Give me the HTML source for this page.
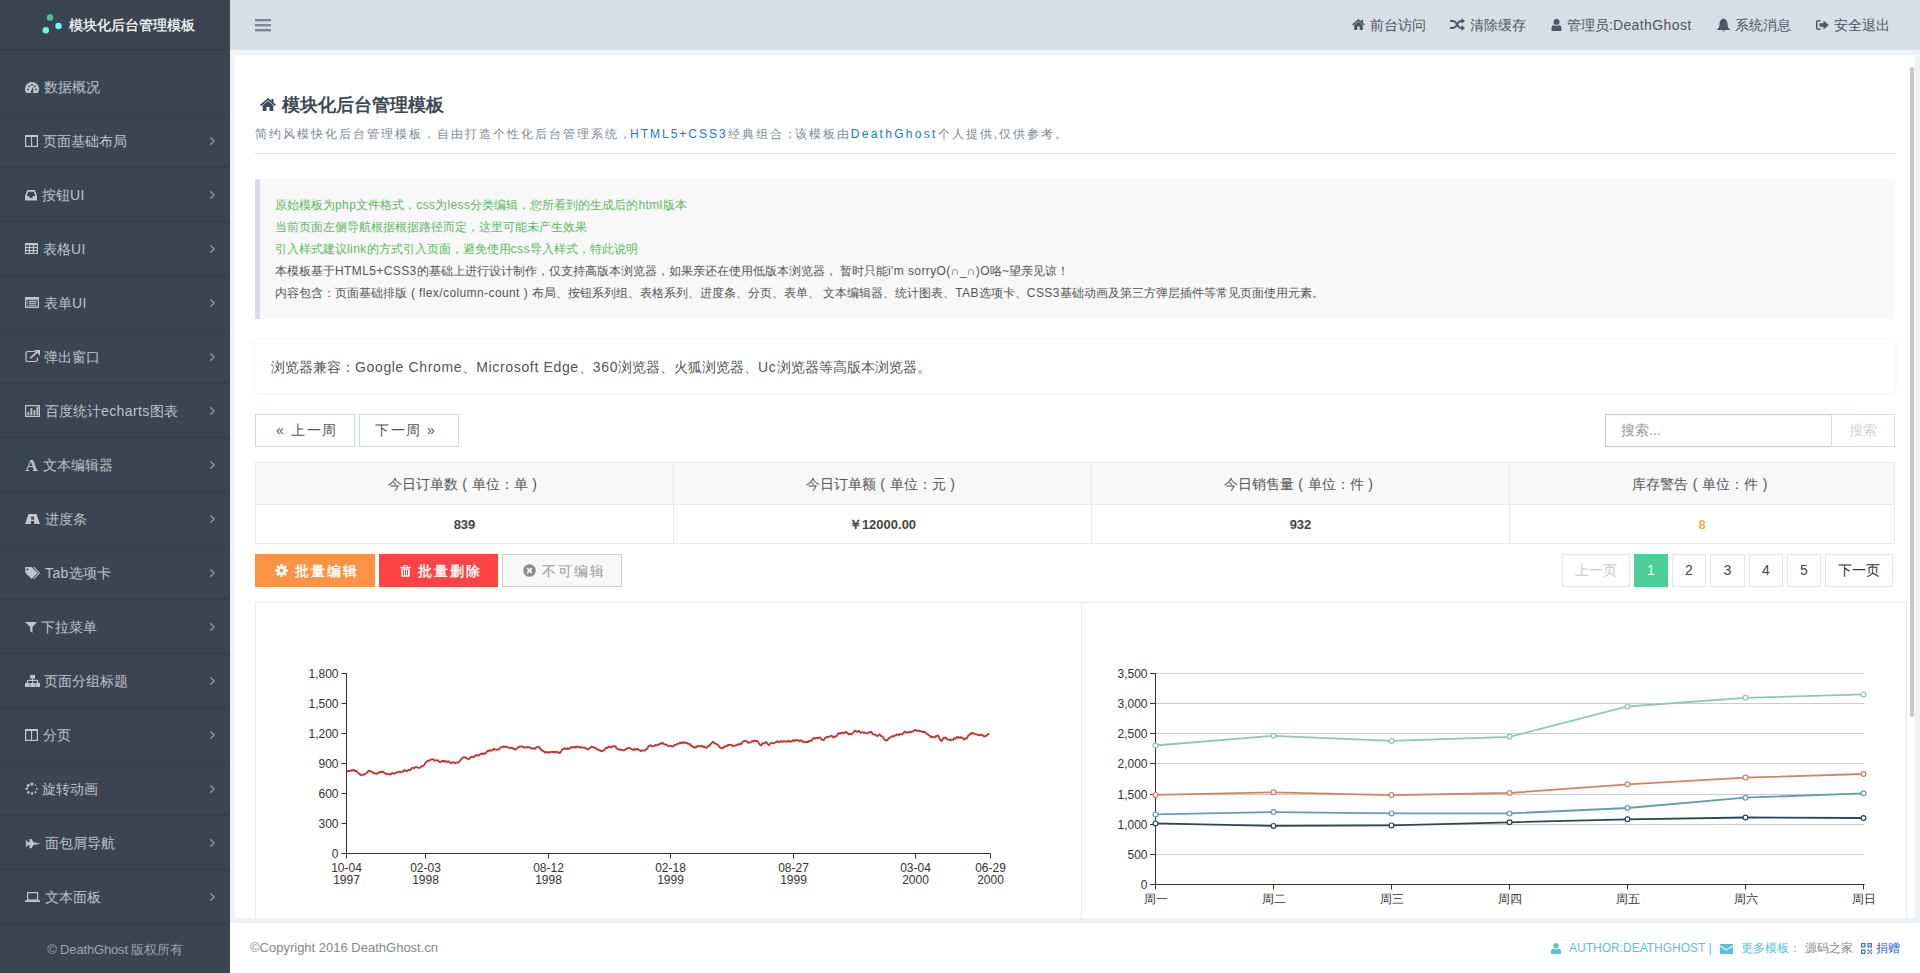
<!DOCTYPE html>
<html><head><meta charset="utf-8">
<style>
*{margin:0;padding:0;box-sizing:border-box}
html,body{width:1920px;height:973px;overflow:hidden;background:#eef1f5;font-family:"Liberation Sans",sans-serif;font-size:14px;color:#555}
.abs{position:absolute}
.nw{white-space:nowrap}
#aside{position:absolute;left:0;top:0;width:230px;height:973px;background:#3a4551}
#logo{position:absolute;left:0;top:0;width:230px;height:50px;border-bottom:1px solid #333d47}
#logo .t{position:absolute;left:69px;top:16px;line-height:18px;font-size:14px;color:#fff;white-space:nowrap;-webkit-text-stroke:0.25px #fff}
#nav{position:absolute;left:0;top:60px;width:230px;height:863px;overflow:hidden}
#nav .it{position:relative;height:54px;border-bottom:1px solid #343e48;color:#bdc3c9;font-size:14px}
#nav .it svg.ic{position:absolute;left:25px}
#nav .it span{position:absolute;top:18px;line-height:18px;white-space:nowrap}
#nav .it svg.ch{position:absolute;left:209px;top:22px}
#afoot{position:absolute;left:0;top:923px;width:230px;height:50px;border-top:1px solid #333d47;color:#9ca4ac;font-size:13px;text-align:center;line-height:51px;letter-spacing:-0.15px}
#hdr{position:absolute;left:230px;top:0;width:1690px;height:50px;background:#d8dee5}
#hdr .hl{position:absolute;top:16px;line-height:18px;color:#4a5665;font-size:14px;white-space:nowrap}
#hdr svg{position:absolute}
#foot{position:absolute;left:230px;top:923px;width:1690px;height:50px;background:#fff}
#panel{position:absolute;left:235px;top:55px;width:1680px;height:863px;background:#fff;overflow:hidden}
#sb{position:absolute;left:1910px;top:67px;width:4px;height:650px;border-radius:2px;background:#c8c8c8}
.ttl{position:absolute;left:282px;top:94px;font-size:18px;line-height:22px;font-weight:bold;color:#3b4856;white-space:nowrap}
.sub{position:absolute;left:255px;top:126px;font-size:12px;line-height:16px;letter-spacing:2px;color:#7d8893;white-space:nowrap}
.sub b{font-weight:normal;color:#1677d6}
.hr{position:absolute;left:255px;top:153px;width:1640px;height:1px;background:#d9e0e7}
.bq{position:absolute;left:255px;top:179px;width:1640px;height:140px;background:#f8f8f8;border-left:5px solid #d5dce5;padding:15px 0 0 15px;font-size:12px;line-height:22px;color:#555}
.bq .g{color:#5cb85c}
.bq div{white-space:nowrap}
.bc{position:absolute;left:255px;top:340px;width:1640px;height:53px;background:#fff;box-shadow:0 0 4px rgba(0,0,0,0.07);font-size:14px;line-height:20px;padding:17px 0 0 16px;color:#555;white-space:nowrap}
.btn{position:absolute;height:33px;border:1px solid #cfd8e1;background:#fff;color:#555;font-size:14px;line-height:31px;text-align:center;white-space:nowrap}
.tbl{position:absolute;left:255px;top:462px;width:1640px;height:82px;border:1px solid #e9e9e9}
.tbl .h{position:absolute;left:0;top:0;width:1638px;height:42px;background:#f8f8f8;border-bottom:1px solid #e9e9e9}
.tbl .c{position:absolute;top:0;height:80px;width:1px;background:#e9e9e9}
i.p{display:inline-block;width:14px;text-align:center}
i.p12{display:inline-block;width:12px;text-align:center}
.tbl .th{position:absolute;top:12px;line-height:18px;font-size:14px;color:#555;text-align:center;white-space:nowrap}
.tbl .td{position:absolute;top:53px;line-height:18px;font-size:13px;font-weight:bold;color:#444;text-align:center;white-space:nowrap}
.ob{position:absolute;top:554px;height:33px;line-height:35px;font-size:14px;letter-spacing:2px;white-space:nowrap}
.pg{position:absolute;top:554px;height:33px;border:1px solid #e5e5e5;background:#fff;font-size:14px;line-height:31px;text-align:center;color:#444}
.cp{position:absolute;top:602px;height:330px;border:1px solid #eaeaea;background:#fff}
#foot .ft{position:absolute;line-height:16px;font-size:13px;white-space:nowrap}
i{font-style:normal}
.l4{letter-spacing:0.4px}
.l6{letter-spacing:0.65px}
</style></head><body>
<div id="aside">
 <div id="logo">
  <svg class="abs" style="left:40px;top:12px" width="24" height="24"><circle cx="10" cy="5.5" r="3.2" fill="#48c78e"/><circle cx="18.5" cy="14" r="3.2" fill="#6ffbfb"/><circle cx="5.8" cy="18.2" r="3.2" fill="#6cf5e3"/></svg>
  <div class="t">模块化后台管理模板</div>
 </div>
 <div id="nav">
<div class="it"><svg class="ic" style="top:22px" width="14" height="12" viewBox="0 0 14 12"><path d="M1.26,11 A7,7 0 1 1 12.74,11 Z" fill="#c0c6cc"/><circle cx="3" cy="7.5" r="1" fill="#3a4551"/><circle cx="4.2" cy="4.2" r="1" fill="#3a4551"/><circle cx="7" cy="2.8" r="1" fill="#3a4551"/><circle cx="9.8" cy="4.2" r="1" fill="#3a4551"/><circle cx="11" cy="7.5" r="1" fill="#3a4551"/><path d="M6,9.5 L8.3,4 L8.2,9.8 Z" fill="#3a4551"/><circle cx="7.1" cy="9.6" r="1.3" fill="#3a4551"/></svg><span style="left:44px">数据概况</span></div>
<div class="it"><svg class="ic" style="top:21px" width="13" height="12" viewBox="0 0 13 12"><rect x="0.6" y="0.6" width="11.8" height="10.8" fill="none" stroke="#c0c6cc" stroke-width="1.2"/><rect x="0" y="0" width="13" height="2" fill="#c0c6cc"/><rect x="6" y="1" width="1.1" height="11" fill="#c0c6cc"/></svg><span style="left:43px">页面基础布局</span><svg class="ch" width="8" height="10" viewBox="0 0 8 10"><path d="M1.3,1.3 L5.2,5 L1.3,8.7" fill="none" stroke="#9eabb8" stroke-width="1.1"/></svg></div>
<div class="it"><svg class="ic" style="top:22px" width="12" height="11" viewBox="0 0 12 11"><path d="M2.3,0 H9.7 L12,6 V10.5 H0 V6 Z" fill="#c0c6cc"/><path d="M3.2,1.8 H8.8 L10.3,6 H8 L7.2,8 H4.8 L4,6 H1.7 Z" fill="#3a4551"/></svg><span style="left:42px">按钮<i class="l4">UI</i></span><svg class="ch" width="8" height="10" viewBox="0 0 8 10"><path d="M1.3,1.3 L5.2,5 L1.3,8.7" fill="none" stroke="#9eabb8" stroke-width="1.1"/></svg></div>
<div class="it"><svg class="ic" style="top:21px" width="13" height="11" viewBox="0 0 13 11"><rect x="0" y="0" width="13" height="11" fill="#c0c6cc"/><rect x="1.1" y="2.1" width="2.7" height="1.9" fill="#3a4551"/><rect x="1.1" y="5.1" width="2.7" height="1.9" fill="#3a4551"/><rect x="1.1" y="8.1" width="2.7" height="1.9" fill="#3a4551"/><rect x="5.1" y="2.1" width="2.7" height="1.9" fill="#3a4551"/><rect x="5.1" y="5.1" width="2.7" height="1.9" fill="#3a4551"/><rect x="5.1" y="8.1" width="2.7" height="1.9" fill="#3a4551"/><rect x="9.1" y="2.1" width="2.7" height="1.9" fill="#3a4551"/><rect x="9.1" y="5.1" width="2.7" height="1.9" fill="#3a4551"/><rect x="9.1" y="8.1" width="2.7" height="1.9" fill="#3a4551"/></svg><span style="left:43px">表格<i class="l4">UI</i></span><svg class="ch" width="8" height="10" viewBox="0 0 8 10"><path d="M1.3,1.3 L5.2,5 L1.3,8.7" fill="none" stroke="#9eabb8" stroke-width="1.1"/></svg></div>
<div class="it"><svg class="ic" style="top:21px" width="14" height="11" viewBox="0 0 14 11"><rect x="0" y="0" width="14" height="11" fill="#c0c6cc"/><rect x="1.2" y="2.8" width="11.6" height="6.9" fill="#3a4551"/><rect x="2" y="3.8" width="1" height="1.1" fill="#c0c6cc"/><rect x="4" y="3.8" width="7.5" height="1.1" fill="#c0c6cc"/><rect x="2" y="5.7" width="1" height="1.1" fill="#c0c6cc"/><rect x="4" y="5.7" width="7.5" height="1.1" fill="#c0c6cc"/><rect x="2" y="7.7" width="1" height="1.1" fill="#c0c6cc"/><rect x="4" y="7.7" width="7.5" height="1.1" fill="#c0c6cc"/></svg><span style="left:44px">表单<i class="l4">UI</i></span><svg class="ch" width="8" height="10" viewBox="0 0 8 10"><path d="M1.3,1.3 L5.2,5 L1.3,8.7" fill="none" stroke="#9eabb8" stroke-width="1.1"/></svg></div>
<div class="it"><svg class="ic" style="top:20px" width="15" height="12" viewBox="0 0 15 12"><path d="M10,1.5 H3 Q1,1.5 1,3.5 V10 Q1,11.6 3,11.6 H10 Q12.4,11.6 12.4,9.5 V7.5" fill="none" stroke="#c0c6cc" stroke-width="1.2"/><path d="M5.5,8.2 L12,1.8" stroke="#c0c6cc" stroke-width="1.7"/><path d="M9.2,0 H15 V5.8 Z" fill="#c0c6cc"/></svg><span style="left:44px">弹出窗口</span><svg class="ch" width="8" height="10" viewBox="0 0 8 10"><path d="M1.3,1.3 L5.2,5 L1.3,8.7" fill="none" stroke="#9eabb8" stroke-width="1.1"/></svg></div>
<div class="it"><svg class="ic" style="top:21px" width="15" height="12" viewBox="0 0 15 12"><rect x="0.6" y="0.6" width="13.8" height="10.8" fill="none" stroke="#c0c6cc" stroke-width="1.2"/><rect x="2.5" y="7" width="1.8" height="3.2" fill="#c0c6cc"/><rect x="5.5" y="3" width="1.8" height="7.2" fill="#c0c6cc"/><rect x="8.5" y="5" width="1.8" height="5.2" fill="#c0c6cc"/><rect x="11.5" y="1.8" width="1.8" height="8.4" fill="#c0c6cc"/></svg><span style="left:45px">百度统计<i class="l4">echarts</i>图表</span><svg class="ch" width="8" height="10" viewBox="0 0 8 10"><path d="M1.3,1.3 L5.2,5 L1.3,8.7" fill="none" stroke="#9eabb8" stroke-width="1.1"/></svg></div>
<div class="it"><svg class="ic" style="top:21px" width="14" height="13" viewBox="0 0 14 13"><text x="6.6" y="12.2" text-anchor="middle" font-family="Liberation Serif" font-weight="bold" font-size="17.5" fill="#c0c6cc">A</text></svg><span style="left:43px">文本编辑器</span><svg class="ch" width="8" height="10" viewBox="0 0 8 10"><path d="M1.3,1.3 L5.2,5 L1.3,8.7" fill="none" stroke="#9eabb8" stroke-width="1.1"/></svg></div>
<div class="it"><svg class="ic" style="top:22px" width="15" height="10" viewBox="0 0 15 10"><path d="M3.5,0 H11.5 L15,10 H0 Z" fill="#c0c6cc"/><rect x="6.2" y="2.6" width="2.8" height="3" fill="#3a4551"/><rect x="6.0" y="7" width="3.2" height="3" fill="#3a4551"/></svg><span style="left:45px">进度条</span><svg class="ch" width="8" height="10" viewBox="0 0 8 10"><path d="M1.3,1.3 L5.2,5 L1.3,8.7" fill="none" stroke="#9eabb8" stroke-width="1.1"/></svg></div>
<div class="it"><svg class="ic" style="top:21px" width="15" height="12" viewBox="0 0 15 12"><path d="M0.3,0 H6.5 L12.5,6 L6.6,12 L0.3,5.7 Z" fill="#c0c6cc"/><circle cx="2.5" cy="2.5" r="0.9" fill="#3a4551"/><path d="M8,0 H9.3 L15,6 L9.3,12 H8 L13.6,6 Z" fill="#c0c6cc"/></svg><span style="left:45px"><i class="l4">Tab</i>选项卡</span><svg class="ch" width="8" height="10" viewBox="0 0 8 10"><path d="M1.3,1.3 L5.2,5 L1.3,8.7" fill="none" stroke="#9eabb8" stroke-width="1.1"/></svg></div>
<div class="it"><svg class="ic" style="top:22px" width="12" height="11" viewBox="0 0 12 11"><path d="M0,0 H12 L7.5,5 V11 L5.2,9.2 V5 Z" fill="#c0c6cc"/></svg><span style="left:41px">下拉菜单</span><svg class="ch" width="8" height="10" viewBox="0 0 8 10"><path d="M1.3,1.3 L5.2,5 L1.3,8.7" fill="none" stroke="#9eabb8" stroke-width="1.1"/></svg></div>
<div class="it"><svg class="ic" style="top:21px" width="15" height="12" viewBox="0 0 15 12"><rect x="5.2" y="0" width="4.8" height="3.6" fill="#c0c6cc"/><rect x="7.1" y="3.5" width="1" height="2.2" fill="#c0c6cc"/><path d="M2.5,8.2 V6.4 Q2.5,5.4 3.5,5.4 H11.7 Q12.7,5.4 12.7,6.4 V8.2" fill="none" stroke="#c0c6cc" stroke-width="1.2"/><rect x="7.1" y="5" width="1" height="3.2" fill="#c0c6cc"/><rect x="0" y="8" width="4.7" height="4" fill="#c0c6cc"/><rect x="5.2" y="8" width="4.7" height="4" fill="#c0c6cc"/><rect x="10.3" y="8" width="4.7" height="4" fill="#c0c6cc"/></svg><span style="left:44px">页面分组标题</span><svg class="ch" width="8" height="10" viewBox="0 0 8 10"><path d="M1.3,1.3 L5.2,5 L1.3,8.7" fill="none" stroke="#9eabb8" stroke-width="1.1"/></svg></div>
<div class="it"><svg class="ic" style="top:21px" width="13" height="12" viewBox="0 0 13 12"><rect x="0.6" y="0.6" width="11.8" height="10.8" fill="none" stroke="#c0c6cc" stroke-width="1.2"/><rect x="0" y="0" width="13" height="2" fill="#c0c6cc"/><rect x="6" y="1" width="1.1" height="11" fill="#c0c6cc"/></svg><span style="left:43px">分页</span><svg class="ch" width="8" height="10" viewBox="0 0 8 10"><path d="M1.3,1.3 L5.2,5 L1.3,8.7" fill="none" stroke="#9eabb8" stroke-width="1.1"/></svg></div>
<div class="it"><svg class="ic" style="top:20px" width="14" height="13" viewBox="0 0 14 13"><circle cx="6.9" cy="2" r="1.6" fill="#c0c6cc"/><circle cx="3.2" cy="3.4" r="1.5" fill="#c0c6cc"/><circle cx="1.8" cy="6.8" r="1.3" fill="#c0c6cc"/><circle cx="3.3" cy="10.3" r="1.3" fill="#c0c6cc"/><circle cx="7" cy="11.5" r="1.2" fill="#c0c6cc"/><circle cx="10.4" cy="10.2" r="1" fill="#c0c6cc"/><circle cx="11.8" cy="6.8" r="0.9" fill="#c0c6cc"/><circle cx="10.5" cy="3.3" r="0.7" fill="#c0c6cc"/></svg><span style="left:42px">旋转动画</span><svg class="ch" width="8" height="10" viewBox="0 0 8 10"><path d="M1.3,1.3 L5.2,5 L1.3,8.7" fill="none" stroke="#9eabb8" stroke-width="1.1"/></svg></div>
<div class="it"><svg class="ic" style="top:23px" width="15" height="10" viewBox="0 0 15 10"><path d="M0.5,1.5 H1.8 L3.2,3.3 H4.5 L4.5,0 H6.5 L8.5,3.3 L15,4.4 V4.8 L8.5,6 L6.5,9.3 H4.5 V6 H3.2 L1.8,7.8 H0.5 L1.2,4.6 Z" fill="#c0c6cc"/></svg><span style="left:45px">面包屑导航</span><svg class="ch" width="8" height="10" viewBox="0 0 8 10"><path d="M1.3,1.3 L5.2,5 L1.3,8.7" fill="none" stroke="#9eabb8" stroke-width="1.1"/></svg></div>
<div class="it"><svg class="ic" style="top:22px" width="15" height="10" viewBox="0 0 15 10"><rect x="2.6" y="0.6" width="10" height="7.4" fill="none" stroke="#c0c6cc" stroke-width="1.2"/><rect x="0" y="8.2" width="15" height="1.8" fill="#c0c6cc"/></svg><span style="left:45px">文本面板</span><svg class="ch" width="8" height="10" viewBox="0 0 8 10"><path d="M1.3,1.3 L5.2,5 L1.3,8.7" fill="none" stroke="#9eabb8" stroke-width="1.1"/></svg></div>
 </div>
 <div id="afoot">© DeathGhost 版权所有</div>
</div>

<div id="hdr">
 <svg style="left:25px;top:19px" width="16" height="13"><rect x="0" y="0" width="16" height="2.4" fill="#7b8896"/><rect x="0" y="5" width="16" height="2.4" fill="#7b8896"/><rect x="0" y="10" width="16" height="2.4" fill="#7b8896"/></svg>
 <!-- home -->
 <svg style="left:1122px;top:19px" width="13" height="11" viewBox="0 0 13 11"><path d="M6.5,0 L13,5.6 L12,6.6 L6.5,1.9 L1,6.6 L0,5.6 Z" fill="#4a5866"/><path d="M2.2,6 L6.5,2.4 L10.8,6 V11 H7.7 V7.6 H5.3 V11 H2.2 Z" fill="#4a5866"/><rect x="9.3" y="0.8" width="1.8" height="3" fill="#4a5866"/></svg>
 <div class="hl" style="left:1140px">前台访问</div>
 <!-- shuffle -->
 <svg style="left:1220px;top:18px" width="15" height="13" viewBox="0 0 15 13"><path d="M0,3 H3 Q5,3 6.5,5.5 L8,8 Q9.3,10 11,10 H12" fill="none" stroke="#4a5866" stroke-width="2"/><path d="M0,10 H3 Q5,10 6.5,7.5 L8,5 Q9.3,3 11,3 H12" fill="none" stroke="#4a5866" stroke-width="2"/><path d="M11.5,0 L15,3 L11.5,6 Z M11.5,7 L15,10 L11.5,13 Z" fill="#4a5866"/></svg>
 <div class="hl" style="left:1240px">清除缓存</div>
 <!-- user -->
 <svg style="left:1321px;top:19px" width="11" height="12" viewBox="0 0 11 12"><circle cx="5.5" cy="3" r="3" fill="#4a5866"/><path d="M0.6,12 V8.6 Q0.6,6.3 2.8,6.3 Q5.5,7.6 8.2,6.3 Q10.4,6.3 10.4,8.6 V12 Z" fill="#4a5866"/></svg>
 <div class="hl" style="left:1337px">管理员:<i class="l4">DeathGhost</i></div>
 <!-- bell -->
 <svg style="left:1487px;top:18px" width="13" height="14" viewBox="0 0 13 14"><path d="M6.5,0.5 Q10.5,1.5 10.5,6 Q10.5,10 13,11.5 V12 H0 V11.5 Q2.5,10 2.5,6 Q2.5,1.5 6.5,0.5 Z" fill="#4a5866"/><path d="M5,12.5 Q6.5,14.5 8,12.5 Z" fill="#4a5866"/></svg>
 <div class="hl" style="left:1505px">系统消息</div>
 <!-- signout -->
 <svg style="left:1586px;top:20px" width="13" height="10" viewBox="0 0 13 10"><path d="M4.5,0.7 H2 Q0.7,0.7 0.7,2 V8 Q0.7,9.3 2,9.3 H4.5" fill="none" stroke="#4a5866" stroke-width="1.4"/><path d="M3.5,3.3 H7.5 V0.5 L12.8,5 L7.5,9.5 V6.7 H3.5 Z" fill="#4a5866"/></svg>
 <div class="hl" style="left:1604px">安全退出</div>
</div>

<div id="panel"></div>
<div id="sb"></div>

<!-- page title -->
<svg class="abs" style="left:260px;top:98px" width="16" height="13" viewBox="0 0 16 13"><path d="M8,0 L16,6.8 L14.8,8 L8,2.3 L1.2,8 L0,6.8 Z" fill="#3d4a57"/><path d="M2.7,7.2 L8,2.9 L13.3,7.2 V13 H9.5 V9 H6.5 V13 H2.7 Z" fill="#3d4a57"/><rect x="11.3" y="1" width="2.2" height="3.8" fill="#3d4a57"/></svg>
<div class="ttl">模块化后台管理模板</div>
<div class="sub">简约风模快化后台管理模板，自由打造个性化后台管理系统<i style="margin-right:-3px">，</i><b>HTML5+CSS3</b>经典组合<i style="margin-right:-3px">；</i>该模板由<b style="letter-spacing:2.3px">DeathGhost</b>个人提供,仅供参考。</div>
<div class="hr"></div>

<div class="bq">
 <div class="g">原始模板为<i class="l4">php</i>文件格式，<i class="l4">css</i>为<i class="l4">less</i>分类编辑，您所看到的生成后的<i class="l4">html</i>版本</div>
 <div class="g">当前页面左侧导航根据根据路径而定，这里可能未产生效果</div>
 <div class="g">引入样式建议<i class="l4">link</i>的方式引入页面，避免使用<i class="l4">css</i>导入样式，特此说明</div>
 <div>本模板基于<i class="l4">HTML5+CSS3</i>的基础上进行设计制作，仅支持高版本浏览器，如果亲还在使用低版本浏览器， 暂时只能<i class="l4">i'm sorryO(∩_∩)O</i>咯~望亲见谅！</div>
 <div>内容包含：页面基础排版<i class="p12">(</i><i class="l4">flex/column-count</i><i class="p12">)</i>布局、按钮系列组、表格系列、进度条、分页、表单、 文本编辑器、统计图表、<i class="l4">TAB</i>选项卡、<i class="l4">CSS3</i>基础动画及第三方弹层插件等常见页面使用元素。</div>
</div>

<div class="bc">浏览器兼容：<i class="l6">Google Chrome</i>、<i class="l6">Microsoft Edge</i>、<i class="l6">360</i>浏览器、火狐浏览器、<i class="l6">Uc</i>浏览器等高版本浏览器。</div>

<div class="btn" style="left:255px;top:414px;width:100px"><span class="abs" style="left:20px;top:0">«</span><span class="abs" style="left:35px;top:0;letter-spacing:1.5px">上一周</span></div>
<div class="btn" style="left:359px;top:414px;width:100px"><span class="abs" style="left:15px;top:0;letter-spacing:1.5px">下一周</span><span class="abs" style="left:67px;top:0">»</span></div>

<div class="abs" style="left:1605px;top:414px;width:227px;height:33px;border:1px solid #c9c9c9;background:#fff;font-size:14px;line-height:31px;color:#999;padding-left:15px">搜索...</div>
<div class="abs" style="left:1831px;top:414px;width:64px;height:33px;border:1px solid #d3dce6;border-left:1px solid #d3dce6;background:#fff;font-size:14px;line-height:31px;color:#cfd3d8;text-align:center">搜索</div>

<div class="tbl">
 <div class="h"></div>
 <div class="c" style="left:417px"></div>
 <div class="c" style="left:835px"></div>
 <div class="c" style="left:1253px"></div>
 <div class="th" style="left:0;width:417px">今日订单数<i class="p">(</i>单位：单<i class="p">)</i></div>
 <div class="th" style="left:418px;width:417px">今日订单额<i class="p">(</i>单位：元<i class="p">)</i></div>
 <div class="th" style="left:836px;width:417px">今日销售量<i class="p">(</i>单位：件<i class="p">)</i></div>
 <div class="th" style="left:1254px;width:384px">库存警告<i class="p">(</i>单位：件<i class="p">)</i></div>
 <div class="td" style="left:0;width:417px">839</div>
 <div class="td" style="left:418px;width:417px">￥12000.00</div>
 <div class="td" style="left:836px;width:417px">932</div>
 <div class="td" style="left:1254px;width:384px;color:#f0ad4e">8</div>
</div>

<div class="ob" style="left:255px;width:120px;background:#fe9245;color:#fff;font-weight:500;-webkit-text-stroke:0.4px #fff"><svg class="abs" style="left:20px;top:10px" width="13" height="13" viewBox="0 0 13 13"><circle cx="6.5" cy="6.5" r="4.6" fill="#fff"/><rect x="5.3" y="0" width="2.4" height="3" rx="0.4" fill="#fff" transform="rotate(0 6.5 6.5)"/><rect x="5.3" y="0" width="2.4" height="3" rx="0.4" fill="#fff" transform="rotate(45 6.5 6.5)"/><rect x="5.3" y="0" width="2.4" height="3" rx="0.4" fill="#fff" transform="rotate(90 6.5 6.5)"/><rect x="5.3" y="0" width="2.4" height="3" rx="0.4" fill="#fff" transform="rotate(135 6.5 6.5)"/><rect x="5.3" y="0" width="2.4" height="3" rx="0.4" fill="#fff" transform="rotate(180 6.5 6.5)"/><rect x="5.3" y="0" width="2.4" height="3" rx="0.4" fill="#fff" transform="rotate(225 6.5 6.5)"/><rect x="5.3" y="0" width="2.4" height="3" rx="0.4" fill="#fff" transform="rotate(270 6.5 6.5)"/><rect x="5.3" y="0" width="2.4" height="3" rx="0.4" fill="#fff" transform="rotate(315 6.5 6.5)"/><circle cx="6.5" cy="6.5" r="1.9" fill="#fe9245"/></svg><span class="abs" style="left:40px;top:0">批量编辑</span></div>
<div class="ob" style="left:379px;width:119px;background:#fe4343;color:#fff;font-weight:500;-webkit-text-stroke:0.4px #fff"><svg class="abs" style="left:21px;top:11px" width="11" height="12" viewBox="0 0 11 12"><rect x="0" y="1.8" width="11" height="1.4" fill="#fff"/><path d="M3.4,2 V1.2 Q3.4,0.5 4.2,0.5 H6.8 Q7.6,0.5 7.6,1.2 V2" fill="none" stroke="#fff" stroke-width="1"/><path d="M1.3,3.4 H9.7 V10.8 Q9.7,11.8 8.7,11.8 H2.3 Q1.3,11.8 1.3,10.8 Z M3,4.8 V10.5 H4 V4.8 Z M5,4.8 V10.5 H6 V4.8 Z M7,4.8 V10.5 H8 V4.8 Z" fill="#fff" fill-rule="evenodd"/></svg><span class="abs" style="left:39px;top:0">批量删除</span></div>
<div class="ob" style="left:502px;width:120px;background:#f8f8f8;border:1px solid #cfcfcf;line-height:33px;color:#999"><svg class="abs" style="left:20px;top:9px" width="13" height="13" viewBox="0 0 13 13"><circle cx="6.5" cy="6.5" r="6.3" fill="#8e8e8e"/><path d="M4.2,4.2 L8.8,8.8 M8.8,4.2 L4.2,8.8" stroke="#f8f8f8" stroke-width="1.8"/></svg><span class="abs" style="left:39px;top:0">不可编辑</span></div>

<div class="pg" style="left:1562px;width:68px;color:#c8c8c8">上一页</div>
<div class="pg" style="left:1634px;width:34px;background:#4bcf96;border-color:#4bcf96;color:#fff">1</div>
<div class="pg" style="left:1672px;width:34px">2</div>
<div class="pg" style="left:1710px;width:35px">3</div>
<div class="pg" style="left:1749px;width:34px">4</div>
<div class="pg" style="left:1787px;width:34px">5</div>
<div class="pg" style="left:1825px;width:68px;color:#333">下一页</div>

<div class="abs" style="left:0;top:0;width:1920px;height:918px;overflow:hidden">
<div class="cp" style="left:255px;width:827px"></div>
<div class="cp" style="left:1081px;width:826px"></div>
<svg style="position:absolute;left:255px;top:603px" width="830" height="320"><g transform="translate(-255,-603)"><line x1="346.5" y1="673" x2="346.5" y2="853.5" stroke="#333" stroke-width="1"/><line x1="346" y1="853.5" x2="990.5" y2="853.5" stroke="#333" stroke-width="1"/><line x1="341.5" y1="853.5" x2="346.5" y2="853.5" stroke="#333"/><text x="338.5" y="857.8" text-anchor="end" font-family="Liberation Sans, sans-serif" font-size="12" fill="#333">0</text><line x1="341.5" y1="823.5" x2="346.5" y2="823.5" stroke="#333"/><text x="338.5" y="827.8" text-anchor="end" font-family="Liberation Sans, sans-serif" font-size="12" fill="#333">300</text><line x1="341.5" y1="793.5" x2="346.5" y2="793.5" stroke="#333"/><text x="338.5" y="797.8" text-anchor="end" font-family="Liberation Sans, sans-serif" font-size="12" fill="#333">600</text><line x1="341.5" y1="763.5" x2="346.5" y2="763.5" stroke="#333"/><text x="338.5" y="767.8" text-anchor="end" font-family="Liberation Sans, sans-serif" font-size="12" fill="#333">900</text><line x1="341.5" y1="733.5" x2="346.5" y2="733.5" stroke="#333"/><text x="338.5" y="737.8" text-anchor="end" font-family="Liberation Sans, sans-serif" font-size="12" fill="#333">1,200</text><line x1="341.5" y1="703.5" x2="346.5" y2="703.5" stroke="#333"/><text x="338.5" y="707.8" text-anchor="end" font-family="Liberation Sans, sans-serif" font-size="12" fill="#333">1,500</text><line x1="341.5" y1="673.5" x2="346.5" y2="673.5" stroke="#333"/><text x="338.5" y="677.8" text-anchor="end" font-family="Liberation Sans, sans-serif" font-size="12" fill="#333">1,800</text><line x1="346.5" y1="853.5" x2="346.5" y2="858.5" stroke="#333"/><text x="346.5" y="871.8" text-anchor="middle" font-family="Liberation Sans, sans-serif" font-size="12" fill="#333">10-04</text><text x="346.5" y="883.8" text-anchor="middle" font-family="Liberation Sans, sans-serif" font-size="12" fill="#333">1997</text><line x1="425.5" y1="853.5" x2="425.5" y2="858.5" stroke="#333"/><text x="425.5" y="871.8" text-anchor="middle" font-family="Liberation Sans, sans-serif" font-size="12" fill="#333">02-03</text><text x="425.5" y="883.8" text-anchor="middle" font-family="Liberation Sans, sans-serif" font-size="12" fill="#333">1998</text><line x1="548.5" y1="853.5" x2="548.5" y2="858.5" stroke="#333"/><text x="548.5" y="871.8" text-anchor="middle" font-family="Liberation Sans, sans-serif" font-size="12" fill="#333">08-12</text><text x="548.5" y="883.8" text-anchor="middle" font-family="Liberation Sans, sans-serif" font-size="12" fill="#333">1998</text><line x1="670.5" y1="853.5" x2="670.5" y2="858.5" stroke="#333"/><text x="670.5" y="871.8" text-anchor="middle" font-family="Liberation Sans, sans-serif" font-size="12" fill="#333">02-18</text><text x="670.5" y="883.8" text-anchor="middle" font-family="Liberation Sans, sans-serif" font-size="12" fill="#333">1999</text><line x1="793.5" y1="853.5" x2="793.5" y2="858.5" stroke="#333"/><text x="793.5" y="871.8" text-anchor="middle" font-family="Liberation Sans, sans-serif" font-size="12" fill="#333">08-27</text><text x="793.5" y="883.8" text-anchor="middle" font-family="Liberation Sans, sans-serif" font-size="12" fill="#333">1999</text><line x1="915.5" y1="853.5" x2="915.5" y2="858.5" stroke="#333"/><text x="915.5" y="871.8" text-anchor="middle" font-family="Liberation Sans, sans-serif" font-size="12" fill="#333">03-04</text><text x="915.5" y="883.8" text-anchor="middle" font-family="Liberation Sans, sans-serif" font-size="12" fill="#333">2000</text><line x1="990.5" y1="853.5" x2="990.5" y2="858.5" stroke="#333"/><text x="990.5" y="871.8" text-anchor="middle" font-family="Liberation Sans, sans-serif" font-size="12" fill="#333">06-29</text><text x="990.5" y="883.8" text-anchor="middle" font-family="Liberation Sans, sans-serif" font-size="12" fill="#333">2000</text><path d="M346.50,771.54 L347.15,771.08 L347.80,771.49 L348.45,770.88 L349.10,771.13 L349.75,771.02 L350.40,770.45 L351.05,770.72 L351.70,770.18 L352.35,770.40 L353.00,770.01 L353.65,769.77 L354.30,770.17 L354.95,771.18 L355.60,770.93 L356.25,770.94 L356.90,771.51 L357.55,772.42 L358.20,772.78 L358.85,773.06 L359.50,774.41 L360.15,774.19 L360.80,775.38 L361.45,775.37 L362.10,775.05 L362.75,774.61 L363.40,774.41 L364.05,774.84 L364.70,773.96 L365.35,773.74 L366.00,773.48 L366.65,772.75 L367.30,772.40 L367.95,771.40 L368.60,770.72 L369.25,770.55 L369.90,771.24 L370.55,771.43 L371.20,771.49 L371.85,772.03 L372.50,772.31 L373.15,772.35 L373.80,773.18 L374.45,773.65 L375.10,773.29 L375.75,773.51 L376.40,773.51 L377.05,773.83 L377.70,773.61 L378.35,772.64 L379.00,772.92 L379.65,771.87 L380.30,771.71 L380.95,772.18 L381.60,771.67 L382.25,771.90 L382.90,771.47 L383.55,772.20 L384.20,772.93 L384.85,773.21 L385.50,773.92 L386.15,773.60 L386.80,773.95 L387.45,774.03 L388.10,774.04 L388.75,773.82 L389.40,774.20 L390.05,774.57 L390.70,774.08 L391.35,773.97 L392.00,772.94 L392.65,773.13 L393.30,773.16 L393.95,773.67 L394.60,773.77 L395.25,773.03 L395.90,772.68 L396.55,772.90 L397.20,772.12 L397.85,772.28 L398.50,771.99 L399.15,771.74 L399.80,771.50 L400.45,772.38 L401.10,772.02 L401.75,771.75 L402.40,771.49 L403.05,771.76 L403.70,770.58 L404.35,770.23 L405.00,770.22 L405.65,770.85 L406.30,771.16 L406.95,771.38 L407.60,770.58 L408.25,770.14 L408.90,769.67 L409.55,770.04 L410.20,770.34 L410.85,769.28 L411.50,768.54 L412.15,768.07 L412.80,767.74 L413.45,767.90 L414.10,768.20 L414.75,767.88 L415.40,767.16 L416.05,767.18 L416.70,767.04 L417.35,767.18 L418.00,767.84 L418.65,767.94 L419.30,767.77 L419.95,767.69 L420.60,767.53 L421.25,766.28 L421.90,766.44 L422.55,766.14 L423.20,765.86 L423.85,765.34 L424.50,764.21 L425.15,763.30 L425.80,762.15 L426.45,762.12 L427.10,761.27 L427.75,760.76 L428.40,760.63 L429.05,760.39 L429.70,760.42 L430.35,759.94 L431.00,759.47 L431.65,759.35 L432.30,759.19 L432.95,759.50 L433.60,759.25 L434.25,760.36 L434.90,760.78 L435.55,760.40 L436.20,760.32 L436.85,760.44 L437.50,760.58 L438.15,760.35 L438.80,761.30 L439.45,762.20 L440.10,762.06 L440.75,762.00 L441.40,761.37 L442.05,760.95 L442.70,761.01 L443.35,760.93 L444.00,761.72 L444.65,761.29 L445.30,760.80 L445.95,761.86 L446.60,761.99 L447.25,761.53 L447.90,761.82 L448.55,761.27 L449.20,761.65 L449.85,762.62 L450.50,763.14 L451.15,763.27 L451.80,762.72 L452.45,762.51 L453.10,762.07 L453.75,762.68 L454.40,762.74 L455.05,763.16 L455.70,762.77 L456.35,762.30 L457.00,762.62 L457.65,762.82 L458.30,762.46 L458.95,761.86 L459.60,761.24 L460.25,760.55 L460.90,759.25 L461.55,758.84 L462.20,758.45 L462.85,757.71 L463.50,757.17 L464.15,757.15 L464.80,757.07 L465.45,757.63 L466.10,758.39 L466.75,758.13 L467.40,758.65 L468.05,759.06 L468.70,759.29 L469.35,758.54 L470.00,757.79 L470.65,757.27 L471.30,756.87 L471.95,756.61 L472.60,756.91 L473.25,757.18 L473.90,756.97 L474.55,756.08 L475.20,755.71 L475.85,755.84 L476.50,754.93 L477.15,755.09 L477.80,755.50 L478.45,755.51 L479.10,755.37 L479.75,754.78 L480.40,753.84 L481.05,754.03 L481.70,753.43 L482.35,753.67 L483.00,754.09 L483.65,753.52 L484.30,753.16 L484.95,753.70 L485.60,753.61 L486.25,752.54 L486.90,751.55 L487.55,750.72 L488.20,751.13 L488.85,751.14 L489.50,750.09 L490.15,750.36 L490.80,750.81 L491.45,750.71 L492.10,750.20 L492.75,750.10 L493.40,749.38 L494.05,748.66 L494.70,749.54 L495.35,749.62 L496.00,749.45 L496.65,749.88 L497.30,749.37 L497.95,749.61 L498.60,749.65 L499.25,748.70 L499.90,748.04 L500.55,747.58 L501.20,747.13 L501.85,747.29 L502.50,746.87 L503.15,746.78 L503.80,746.25 L504.45,747.03 L505.10,746.73 L505.75,746.66 L506.40,746.80 L507.05,747.39 L507.70,747.09 L508.35,747.70 L509.00,747.62 L509.65,747.75 L510.30,747.98 L510.95,747.52 L511.60,747.97 L512.25,748.01 L512.90,747.85 L513.55,748.98 L514.20,748.85 L514.85,749.17 L515.50,749.69 L516.15,749.45 L516.80,748.50 L517.45,747.78 L518.10,747.20 L518.75,747.25 L519.40,746.50 L520.05,746.68 L520.70,746.34 L521.35,746.14 L522.00,746.75 L522.65,746.78 L523.30,746.88 L523.95,747.24 L524.60,747.73 L525.25,747.37 L525.90,747.38 L526.55,747.25 L527.20,747.18 L527.85,747.43 L528.50,747.27 L529.15,747.30 L529.80,747.27 L530.45,747.96 L531.10,748.11 L531.75,748.51 L532.40,748.90 L533.05,748.18 L533.70,748.14 L534.35,748.70 L535.00,748.94 L535.65,748.07 L536.30,747.43 L536.95,747.47 L537.60,746.93 L538.25,746.85 L538.90,746.69 L539.55,747.63 L540.20,748.65 L540.85,749.72 L541.50,749.53 L542.15,750.40 L542.80,751.03 L543.45,750.78 L544.10,751.74 L544.75,752.51 L545.40,751.87 L546.05,752.47 L546.70,752.08 L547.35,751.97 L548.00,752.67 L548.65,752.95 L549.30,752.18 L549.95,752.07 L550.60,752.16 L551.25,751.98 L551.90,751.68 L552.55,751.68 L553.20,752.32 L553.85,751.74 L554.50,752.15 L555.15,752.28 L555.80,751.76 L556.45,751.86 L557.10,752.38 L557.75,752.57 L558.40,752.01 L559.05,752.86 L559.70,752.91 L560.35,752.94 L561.00,751.41 L561.65,750.35 L562.30,749.11 L562.95,749.28 L563.60,748.66 L564.25,748.11 L564.90,748.25 L565.55,749.06 L566.20,749.45 L566.85,748.84 L567.50,748.21 L568.15,748.87 L568.80,748.76 L569.45,748.83 L570.10,747.90 L570.75,747.15 L571.40,747.53 L572.05,747.35 L572.70,746.65 L573.35,747.42 L574.00,747.47 L574.65,747.73 L575.30,746.81 L575.95,747.32 L576.60,746.49 L577.25,747.10 L577.90,746.93 L578.55,746.67 L579.20,746.89 L579.85,747.69 L580.50,747.37 L581.15,747.05 L581.80,747.53 L582.45,747.54 L583.10,747.46 L583.75,747.57 L584.40,747.55 L585.05,747.82 L585.70,748.20 L586.35,748.46 L587.00,749.31 L587.65,749.15 L588.30,749.25 L588.95,748.68 L589.60,748.37 L590.25,747.52 L590.90,747.17 L591.55,746.51 L592.20,747.12 L592.85,747.33 L593.50,747.03 L594.15,747.32 L594.80,748.30 L595.45,747.85 L596.10,748.72 L596.75,748.84 L597.40,749.12 L598.05,749.91 L598.70,749.86 L599.35,750.03 L600.00,750.44 L600.65,751.16 L601.30,750.66 L601.95,751.00 L602.60,750.99 L603.25,750.81 L603.90,750.25 L604.55,749.70 L605.20,748.77 L605.85,748.14 L606.50,747.52 L607.15,747.99 L607.80,747.51 L608.45,746.95 L609.10,746.38 L609.75,747.05 L610.40,747.52 L611.05,747.52 L611.70,746.92 L612.35,746.45 L613.00,746.21 L613.65,746.34 L614.30,746.05 L614.95,746.38 L615.60,746.46 L616.25,747.69 L616.90,748.71 L617.55,748.92 L618.20,748.75 L618.85,749.83 L619.50,749.72 L620.15,749.81 L620.80,749.41 L621.45,749.75 L622.10,750.14 L622.75,750.45 L623.40,750.18 L624.05,750.39 L624.70,749.70 L625.35,749.50 L626.00,748.99 L626.65,748.99 L627.30,748.37 L627.95,747.82 L628.60,747.82 L629.25,747.69 L629.90,748.14 L630.55,748.42 L631.20,748.97 L631.85,749.21 L632.50,749.47 L633.15,749.90 L633.80,749.46 L634.45,749.06 L635.10,749.77 L635.75,749.01 L636.40,749.35 L637.05,749.46 L637.70,748.68 L638.35,749.42 L639.00,750.11 L639.65,750.29 L640.30,750.64 L640.95,751.05 L641.60,750.33 L642.25,750.37 L642.90,750.30 L643.55,750.58 L644.20,750.53 L644.85,750.31 L645.50,749.58 L646.15,749.34 L646.80,748.71 L647.45,748.18 L648.10,747.07 L648.75,746.02 L649.40,745.53 L650.05,745.57 L650.70,745.18 L651.35,745.96 L652.00,746.04 L652.65,746.16 L653.30,746.17 L653.95,746.21 L654.60,745.88 L655.25,744.86 L655.90,745.28 L656.55,745.43 L657.20,745.12 L657.85,744.90 L658.50,744.88 L659.15,743.94 L659.80,744.26 L660.45,743.74 L661.10,743.09 L661.75,742.92 L662.40,743.50 L663.05,743.14 L663.70,743.72 L664.35,744.55 L665.00,744.50 L665.65,744.39 L666.30,744.55 L666.95,745.09 L667.60,745.69 L668.25,745.99 L668.90,746.32 L669.55,745.79 L670.20,745.59 L670.85,745.65 L671.50,746.45 L672.15,746.36 L672.80,746.67 L673.45,746.01 L674.10,745.39 L674.75,744.93 L675.40,744.90 L676.05,744.69 L676.70,744.43 L677.35,743.75 L678.00,743.78 L678.65,743.67 L679.30,743.48 L679.95,742.70 L680.60,743.21 L681.25,742.43 L681.90,742.98 L682.55,743.28 L683.20,742.12 L683.85,742.01 L684.50,742.55 L685.15,743.23 L685.80,743.04 L686.45,742.75 L687.10,742.59 L687.75,743.72 L688.40,743.55 L689.05,744.13 L689.70,744.01 L690.35,744.62 L691.00,745.81 L691.65,745.51 L692.30,746.40 L692.95,746.61 L693.60,747.36 L694.25,747.61 L694.90,747.05 L695.55,747.62 L696.20,747.38 L696.85,746.52 L697.50,745.89 L698.15,746.18 L698.80,746.32 L699.45,746.20 L700.10,745.87 L700.75,745.95 L701.40,745.96 L702.05,746.75 L702.70,746.05 L703.35,746.68 L704.00,747.25 L704.65,746.58 L705.30,747.31 L705.95,747.51 L706.60,747.86 L707.25,747.01 L707.90,746.33 L708.55,745.66 L709.20,745.89 L709.85,745.25 L710.50,744.30 L711.15,743.64 L711.80,742.92 L712.45,742.09 L713.10,741.68 L713.75,742.61 L714.40,742.59 L715.05,743.71 L715.70,743.66 L716.35,743.83 L717.00,744.50 L717.65,744.64 L718.30,745.13 L718.95,746.44 L719.60,747.29 L720.25,747.76 L720.90,747.77 L721.55,748.12 L722.20,748.35 L722.85,747.84 L723.50,747.67 L724.15,746.46 L724.80,746.56 L725.45,746.14 L726.10,746.24 L726.75,746.11 L727.40,745.46 L728.05,744.65 L728.70,745.42 L729.35,744.79 L730.00,744.90 L730.65,744.80 L731.30,744.69 L731.95,745.30 L732.60,746.11 L733.25,745.63 L733.90,745.89 L734.55,745.56 L735.20,745.71 L735.85,745.56 L736.50,745.08 L737.15,744.62 L737.80,744.23 L738.45,744.84 L739.10,744.48 L739.75,743.65 L740.40,743.95 L741.05,744.17 L741.70,743.42 L742.35,742.37 L743.00,741.71 L743.65,741.12 L744.30,741.16 L744.95,740.85 L745.60,740.87 L746.25,740.95 L746.90,741.49 L747.55,742.37 L748.20,742.80 L748.85,742.60 L749.50,742.46 L750.15,742.52 L750.80,742.30 L751.45,741.99 L752.10,741.24 L752.75,740.92 L753.40,741.62 L754.05,740.76 L754.70,740.67 L755.35,740.78 L756.00,741.22 L756.65,740.64 L757.30,740.78 L757.95,741.47 L758.60,742.64 L759.25,743.67 L759.90,744.92 L760.55,745.31 L761.20,745.50 L761.85,744.23 L762.50,743.21 L763.15,743.39 L763.80,743.70 L764.45,743.21 L765.10,743.02 L765.75,742.03 L766.40,741.98 L767.05,743.04 L767.70,743.97 L768.35,744.76 L769.00,745.31 L769.65,744.46 L770.30,743.57 L770.95,742.92 L771.60,742.91 L772.25,743.03 L772.90,743.40 L773.55,743.25 L774.20,742.96 L774.85,742.89 L775.50,742.36 L776.15,742.14 L776.80,741.26 L777.45,741.78 L778.10,741.34 L778.75,742.07 L779.40,742.19 L780.05,741.77 L780.70,741.24 L781.35,741.06 L782.00,741.53 L782.65,741.97 L783.30,741.41 L783.95,740.96 L784.60,741.34 L785.25,741.70 L785.90,741.66 L786.55,741.39 L787.20,741.76 L787.85,741.11 L788.50,740.98 L789.15,740.98 L789.80,741.59 L790.45,741.43 L791.10,741.61 L791.75,741.09 L792.40,740.40 L793.05,740.00 L793.70,740.82 L794.35,741.03 L795.00,740.59 L795.65,739.88 L796.30,740.10 L796.95,740.54 L797.60,740.48 L798.25,740.19 L798.90,740.61 L799.55,741.28 L800.20,740.72 L800.85,740.24 L801.50,740.57 L802.15,741.07 L802.80,741.83 L803.45,741.53 L804.10,742.12 L804.75,742.39 L805.40,742.17 L806.05,741.54 L806.70,742.22 L807.35,741.71 L808.00,742.14 L808.65,741.50 L809.30,740.90 L809.95,741.14 L810.60,740.44 L811.25,740.77 L811.90,740.16 L812.55,739.14 L813.20,738.38 L813.85,738.07 L814.50,738.21 L815.15,738.75 L815.80,737.98 L816.45,737.88 L817.10,737.57 L817.75,738.55 L818.40,738.03 L819.05,737.58 L819.70,737.33 L820.35,737.68 L821.00,738.70 L821.65,739.40 L822.30,739.66 L822.95,740.22 L823.60,740.30 L824.25,739.12 L824.90,737.79 L825.55,737.87 L826.20,737.71 L826.85,736.71 L827.50,737.00 L828.15,736.79 L828.80,736.65 L829.45,736.51 L830.10,736.19 L830.75,735.73 L831.40,735.84 L832.05,736.03 L832.70,737.08 L833.35,736.56 L834.00,737.46 L834.65,736.92 L835.30,736.46 L835.95,736.45 L836.60,736.09 L837.25,735.01 L837.90,733.58 L838.55,733.31 L839.20,733.16 L839.85,733.86 L840.50,733.20 L841.15,732.93 L841.80,733.48 L842.45,732.53 L843.10,732.42 L843.75,732.96 L844.40,733.30 L845.05,732.52 L845.70,732.03 L846.35,731.81 L847.00,733.02 L847.65,732.94 L848.30,733.67 L848.95,734.43 L849.60,734.12 L850.25,733.77 L850.90,734.48 L851.55,734.30 L852.20,733.44 L852.85,733.33 L853.50,732.46 L854.15,731.65 L854.80,730.58 L855.45,730.93 L856.10,731.45 L856.75,731.49 L857.40,732.05 L858.05,731.13 L858.70,730.88 L859.35,731.15 L860.00,732.13 L860.65,732.87 L861.30,732.59 L861.95,732.22 L862.60,732.22 L863.25,732.31 L863.90,732.98 L864.55,732.32 L865.20,732.78 L865.85,733.00 L866.50,733.26 L867.15,733.36 L867.80,733.18 L868.45,732.62 L869.10,732.22 L869.75,732.00 L870.40,732.48 L871.05,731.84 L871.70,732.08 L872.35,733.61 L873.00,734.27 L873.65,734.52 L874.30,734.41 L874.95,734.86 L875.60,734.75 L876.25,735.57 L876.90,735.93 L877.55,736.31 L878.20,735.50 L878.85,734.71 L879.50,734.31 L880.15,734.81 L880.80,735.69 L881.45,736.13 L882.10,736.34 L882.75,736.98 L883.40,737.90 L884.05,738.77 L884.70,739.58 L885.35,740.33 L886.00,740.56 L886.65,739.82 L887.30,740.17 L887.95,739.21 L888.60,738.64 L889.25,737.80 L889.90,737.84 L890.55,737.24 L891.20,736.84 L891.85,736.44 L892.50,735.90 L893.15,736.47 L893.80,736.27 L894.45,735.61 L895.10,735.14 L895.75,735.59 L896.40,735.10 L897.05,734.29 L897.70,734.57 L898.35,734.54 L899.00,735.07 L899.65,734.13 L900.30,733.98 L900.95,734.31 L901.60,734.49 L902.25,734.64 L902.90,733.35 L903.55,732.75 L904.20,731.99 L904.85,731.51 L905.50,732.30 L906.15,732.25 L906.80,732.73 L907.45,732.25 L908.10,732.68 L908.75,732.34 L909.40,731.77 L910.05,732.11 L910.70,732.54 L911.35,731.54 L912.00,731.54 L912.65,731.54 L913.30,730.92 L913.95,730.71 L914.60,730.23 L915.25,730.02 L915.90,729.99 L916.55,730.54 L917.20,731.08 L917.85,730.84 L918.50,730.45 L919.15,730.70 L919.80,731.44 L920.45,731.25 L921.10,731.30 L921.75,731.16 L922.40,731.93 L923.05,732.17 L923.70,731.73 L924.35,731.62 L925.00,732.13 L925.65,732.88 L926.30,733.70 L926.95,733.62 L927.60,733.82 L928.25,734.89 L928.90,735.34 L929.55,735.56 L930.20,735.82 L930.85,737.00 L931.50,736.88 L932.15,737.15 L932.80,736.97 L933.45,736.82 L934.10,737.23 L934.75,737.56 L935.40,736.74 L936.05,735.88 L936.70,736.09 L937.35,735.57 L938.00,735.32 L938.65,736.98 L939.30,737.87 L939.95,739.41 L940.60,739.99 L941.25,740.99 L941.90,740.75 L942.55,739.68 L943.20,738.26 L943.85,737.78 L944.50,737.54 L945.15,738.00 L945.80,737.49 L946.45,738.39 L947.10,739.00 L947.75,739.80 L948.40,739.73 L949.05,739.63 L949.70,739.82 L950.35,740.48 L951.00,739.61 L951.65,739.47 L952.30,739.73 L952.95,740.03 L953.60,738.98 L954.25,738.02 L954.90,738.48 L955.55,738.76 L956.20,738.15 L956.85,737.04 L957.50,737.54 L958.15,737.08 L958.80,737.55 L959.45,737.49 L960.10,737.86 L960.75,737.25 L961.40,737.91 L962.05,737.67 L962.70,737.90 L963.35,738.81 L964.00,739.47 L964.65,738.97 L965.30,738.62 L965.95,738.51 L966.60,738.31 L967.25,737.59 L967.90,736.32 L968.55,735.27 L969.20,734.97 L969.85,734.83 L970.50,733.38 L971.15,733.20 L971.80,733.54 L972.45,732.82 L973.10,733.60 L973.75,733.15 L974.40,733.65 L975.05,734.02 L975.70,734.47 L976.35,734.36 L977.00,734.50 L977.65,734.84 L978.30,734.83 L978.95,735.14 L979.60,735.06 L980.25,735.05 L980.90,734.50 L981.55,735.07 L982.20,735.35 L982.85,735.22 L983.50,735.97 L984.15,736.54 L984.80,736.46 L985.45,735.97 L986.10,736.01 L986.75,735.26 L987.40,734.54 L988.05,734.32 L988.70,733.62 L989.35,733.76" fill="none" stroke="#c23531" stroke-width="1.8" stroke-linejoin="round"/></g></svg>
<svg style="position:absolute;left:1081px;top:603px" width="830" height="320"><g transform="translate(-1081,-603)"><line x1="1150" y1="884.5" x2="1155" y2="884.5" stroke="#333"/><text x="1147.5" y="888.8" text-anchor="end" font-family="Liberation Sans, sans-serif" font-size="12" fill="#333">0</text><line x1="1155" y1="854.5" x2="1864" y2="854.5" stroke="#ccc" stroke-width="1"/><line x1="1150" y1="854.5" x2="1155" y2="854.5" stroke="#333"/><text x="1147.5" y="858.8" text-anchor="end" font-family="Liberation Sans, sans-serif" font-size="12" fill="#333">500</text><line x1="1155" y1="824.5" x2="1864" y2="824.5" stroke="#ccc" stroke-width="1"/><line x1="1150" y1="824.5" x2="1155" y2="824.5" stroke="#333"/><text x="1147.5" y="828.8" text-anchor="end" font-family="Liberation Sans, sans-serif" font-size="12" fill="#333">1,000</text><line x1="1155" y1="794.5" x2="1864" y2="794.5" stroke="#ccc" stroke-width="1"/><line x1="1150" y1="794.5" x2="1155" y2="794.5" stroke="#333"/><text x="1147.5" y="798.8" text-anchor="end" font-family="Liberation Sans, sans-serif" font-size="12" fill="#333">1,500</text><line x1="1155" y1="763.5" x2="1864" y2="763.5" stroke="#ccc" stroke-width="1"/><line x1="1150" y1="763.5" x2="1155" y2="763.5" stroke="#333"/><text x="1147.5" y="767.8" text-anchor="end" font-family="Liberation Sans, sans-serif" font-size="12" fill="#333">2,000</text><line x1="1155" y1="733.5" x2="1864" y2="733.5" stroke="#ccc" stroke-width="1"/><line x1="1150" y1="733.5" x2="1155" y2="733.5" stroke="#333"/><text x="1147.5" y="737.8" text-anchor="end" font-family="Liberation Sans, sans-serif" font-size="12" fill="#333">2,500</text><line x1="1155" y1="703.5" x2="1864" y2="703.5" stroke="#ccc" stroke-width="1"/><line x1="1150" y1="703.5" x2="1155" y2="703.5" stroke="#333"/><text x="1147.5" y="707.8" text-anchor="end" font-family="Liberation Sans, sans-serif" font-size="12" fill="#333">3,000</text><line x1="1155" y1="673.5" x2="1864" y2="673.5" stroke="#ccc" stroke-width="1"/><line x1="1150" y1="673.5" x2="1155" y2="673.5" stroke="#333"/><text x="1147.5" y="677.8" text-anchor="end" font-family="Liberation Sans, sans-serif" font-size="12" fill="#333">3,500</text><line x1="1155.5" y1="673" x2="1155.5" y2="884.5" stroke="#333"/><line x1="1155" y1="884.5" x2="1864.5" y2="884.5" stroke="#333"/><line x1="1155.5" y1="884.5" x2="1155.5" y2="889.5" stroke="#333"/><text x="1155.5" y="903" text-anchor="middle" font-family="Liberation Sans, sans-serif" font-size="12" fill="#333">周一</text><line x1="1273.5" y1="884.5" x2="1273.5" y2="889.5" stroke="#333"/><text x="1273.5" y="903" text-anchor="middle" font-family="Liberation Sans, sans-serif" font-size="12" fill="#333">周二</text><line x1="1391.5" y1="884.5" x2="1391.5" y2="889.5" stroke="#333"/><text x="1391.5" y="903" text-anchor="middle" font-family="Liberation Sans, sans-serif" font-size="12" fill="#333">周三</text><line x1="1509.5" y1="884.5" x2="1509.5" y2="889.5" stroke="#333"/><text x="1509.5" y="903" text-anchor="middle" font-family="Liberation Sans, sans-serif" font-size="12" fill="#333">周四</text><line x1="1627.5" y1="884.5" x2="1627.5" y2="889.5" stroke="#333"/><text x="1627.5" y="903" text-anchor="middle" font-family="Liberation Sans, sans-serif" font-size="12" fill="#333">周五</text><line x1="1745.5" y1="884.5" x2="1745.5" y2="889.5" stroke="#333"/><text x="1745.5" y="903" text-anchor="middle" font-family="Liberation Sans, sans-serif" font-size="12" fill="#333">周六</text><line x1="1863.5" y1="884.5" x2="1863.5" y2="889.5" stroke="#333"/><text x="1863.5" y="903" text-anchor="middle" font-family="Liberation Sans, sans-serif" font-size="12" fill="#333">周日</text><path d="M1155.5,745.5 L1273.5,735.8 L1391.5,740.9 L1509.5,736.8 L1627.5,706.5 L1745.5,697.8 L1863.5,694.4" fill="none" stroke="#91c7ae" stroke-width="1.8"/><circle cx="1155.5" cy="745.5" r="2.4" fill="#fff" stroke="#91c7ae" stroke-width="1.2"/><circle cx="1273.5" cy="735.8" r="2.4" fill="#fff" stroke="#91c7ae" stroke-width="1.2"/><circle cx="1391.5" cy="740.9" r="2.4" fill="#fff" stroke="#91c7ae" stroke-width="1.2"/><circle cx="1509.5" cy="736.8" r="2.4" fill="#fff" stroke="#91c7ae" stroke-width="1.2"/><circle cx="1627.5" cy="706.5" r="2.4" fill="#fff" stroke="#91c7ae" stroke-width="1.2"/><circle cx="1745.5" cy="697.8" r="2.4" fill="#fff" stroke="#91c7ae" stroke-width="1.2"/><circle cx="1863.5" cy="694.4" r="2.4" fill="#fff" stroke="#91c7ae" stroke-width="1.2"/><path d="M1155.5,794.9 L1273.5,792.3 L1391.5,795.1 L1509.5,793.0 L1627.5,784.3 L1745.5,777.6 L1863.5,774.0" fill="none" stroke="#d48265" stroke-width="1.8"/><circle cx="1155.5" cy="794.9" r="2.4" fill="#fff" stroke="#d48265" stroke-width="1.2"/><circle cx="1273.5" cy="792.3" r="2.4" fill="#fff" stroke="#d48265" stroke-width="1.2"/><circle cx="1391.5" cy="795.1" r="2.4" fill="#fff" stroke="#d48265" stroke-width="1.2"/><circle cx="1509.5" cy="793.0" r="2.4" fill="#fff" stroke="#d48265" stroke-width="1.2"/><circle cx="1627.5" cy="784.3" r="2.4" fill="#fff" stroke="#d48265" stroke-width="1.2"/><circle cx="1745.5" cy="777.6" r="2.4" fill="#fff" stroke="#d48265" stroke-width="1.2"/><circle cx="1863.5" cy="774.0" r="2.4" fill="#fff" stroke="#d48265" stroke-width="1.2"/><path d="M1155.5,814.4 L1273.5,812.1 L1391.5,813.4 L1509.5,813.4 L1627.5,808.0 L1745.5,797.7 L1863.5,793.3" fill="none" stroke="#61a0a8" stroke-width="1.8"/><circle cx="1155.5" cy="814.4" r="2.4" fill="#fff" stroke="#61a0a8" stroke-width="1.2"/><circle cx="1273.5" cy="812.1" r="2.4" fill="#fff" stroke="#61a0a8" stroke-width="1.2"/><circle cx="1391.5" cy="813.4" r="2.4" fill="#fff" stroke="#61a0a8" stroke-width="1.2"/><circle cx="1509.5" cy="813.4" r="2.4" fill="#fff" stroke="#61a0a8" stroke-width="1.2"/><circle cx="1627.5" cy="808.0" r="2.4" fill="#fff" stroke="#61a0a8" stroke-width="1.2"/><circle cx="1745.5" cy="797.7" r="2.4" fill="#fff" stroke="#61a0a8" stroke-width="1.2"/><circle cx="1863.5" cy="793.3" r="2.4" fill="#fff" stroke="#61a0a8" stroke-width="1.2"/><path d="M1155.5,823.4 L1273.5,825.9 L1391.5,825.4 L1509.5,822.3 L1627.5,819.3 L1745.5,817.5 L1863.5,818.0" fill="none" stroke="#2f4554" stroke-width="1.8"/><circle cx="1155.5" cy="823.4" r="2.4" fill="#fff" stroke="#2f4554" stroke-width="1.2"/><circle cx="1273.5" cy="825.9" r="2.4" fill="#fff" stroke="#2f4554" stroke-width="1.2"/><circle cx="1391.5" cy="825.4" r="2.4" fill="#fff" stroke="#2f4554" stroke-width="1.2"/><circle cx="1509.5" cy="822.3" r="2.4" fill="#fff" stroke="#2f4554" stroke-width="1.2"/><circle cx="1627.5" cy="819.3" r="2.4" fill="#fff" stroke="#2f4554" stroke-width="1.2"/><circle cx="1745.5" cy="817.5" r="2.4" fill="#fff" stroke="#2f4554" stroke-width="1.2"/><circle cx="1863.5" cy="818.0" r="2.4" fill="#fff" stroke="#2f4554" stroke-width="1.2"/></g></svg>
</div>

<div id="foot">
 <div class="ft" style="left:20px;top:17px;color:#888">©Copyright 2016 DeathGhost.cn</div>
 <svg class="abs" style="left:1321px;top:20px" width="10" height="11" viewBox="0 0 10 11"><circle cx="5" cy="2.7" r="2.7" fill="#5bc0de"/><path d="M0,11 V8 Q0,5.7 2,5.7 Q5,7 8,5.7 Q10,5.7 10,8 V11 Z" fill="#5bc0de"/></svg>
 <div class="ft" style="left:1339px;top:17px;font-size:12px;color:#5bc0de;letter-spacing:0px">AUTHOR:DEATHGHOST |</div>
 <svg class="abs" style="left:1490px;top:21px" width="13" height="10" viewBox="0 0 13 10"><path d="M0,0 H13 V1.2 L6.5,5.2 L0,1.2 Z" fill="#5bc0de"/><path d="M0,2.6 L6.5,6.6 L13,2.6 V10 H0 Z" fill="#5bc0de"/></svg>
 <div class="ft" style="left:1511px;top:17px;font-size:12px;color:#5bc0de">更多模板：</div>
 <div class="ft" style="left:1575px;top:17px;font-size:12px;color:#888">源码之家</div>
 <svg class="abs" style="left:1631px;top:20px" width="11" height="11" viewBox="0 0 11 11"><path d="M0,0 H4.5 V4.5 H0 Z M1.2,1.2 V3.3 H3.3 V1.2 Z M6.5,0 H11 V4.5 H6.5 Z M7.7,1.2 V3.3 H9.8 V1.2 Z M0,6.5 H4.5 V11 H0 Z M1.2,7.7 V9.8 H3.3 V7.7 Z" fill="#3a6fcf" fill-rule="evenodd"/><rect x="6.5" y="6.5" width="1.5" height="1.5" fill="#3a6fcf"/><rect x="9.5" y="6.5" width="1.5" height="1.5" fill="#3a6fcf"/><rect x="6.5" y="9.5" width="1.5" height="1.5" fill="#3a6fcf"/><rect x="9.5" y="9.5" width="1.5" height="1.5" fill="#3a6fcf"/><rect x="8" y="8" width="1.5" height="1.5" fill="#3a6fcf"/></svg>
 <div class="ft" style="left:1646px;top:17px;font-size:12px;color:#2a62d0">捐赠</div>
</div>
</body></html>
